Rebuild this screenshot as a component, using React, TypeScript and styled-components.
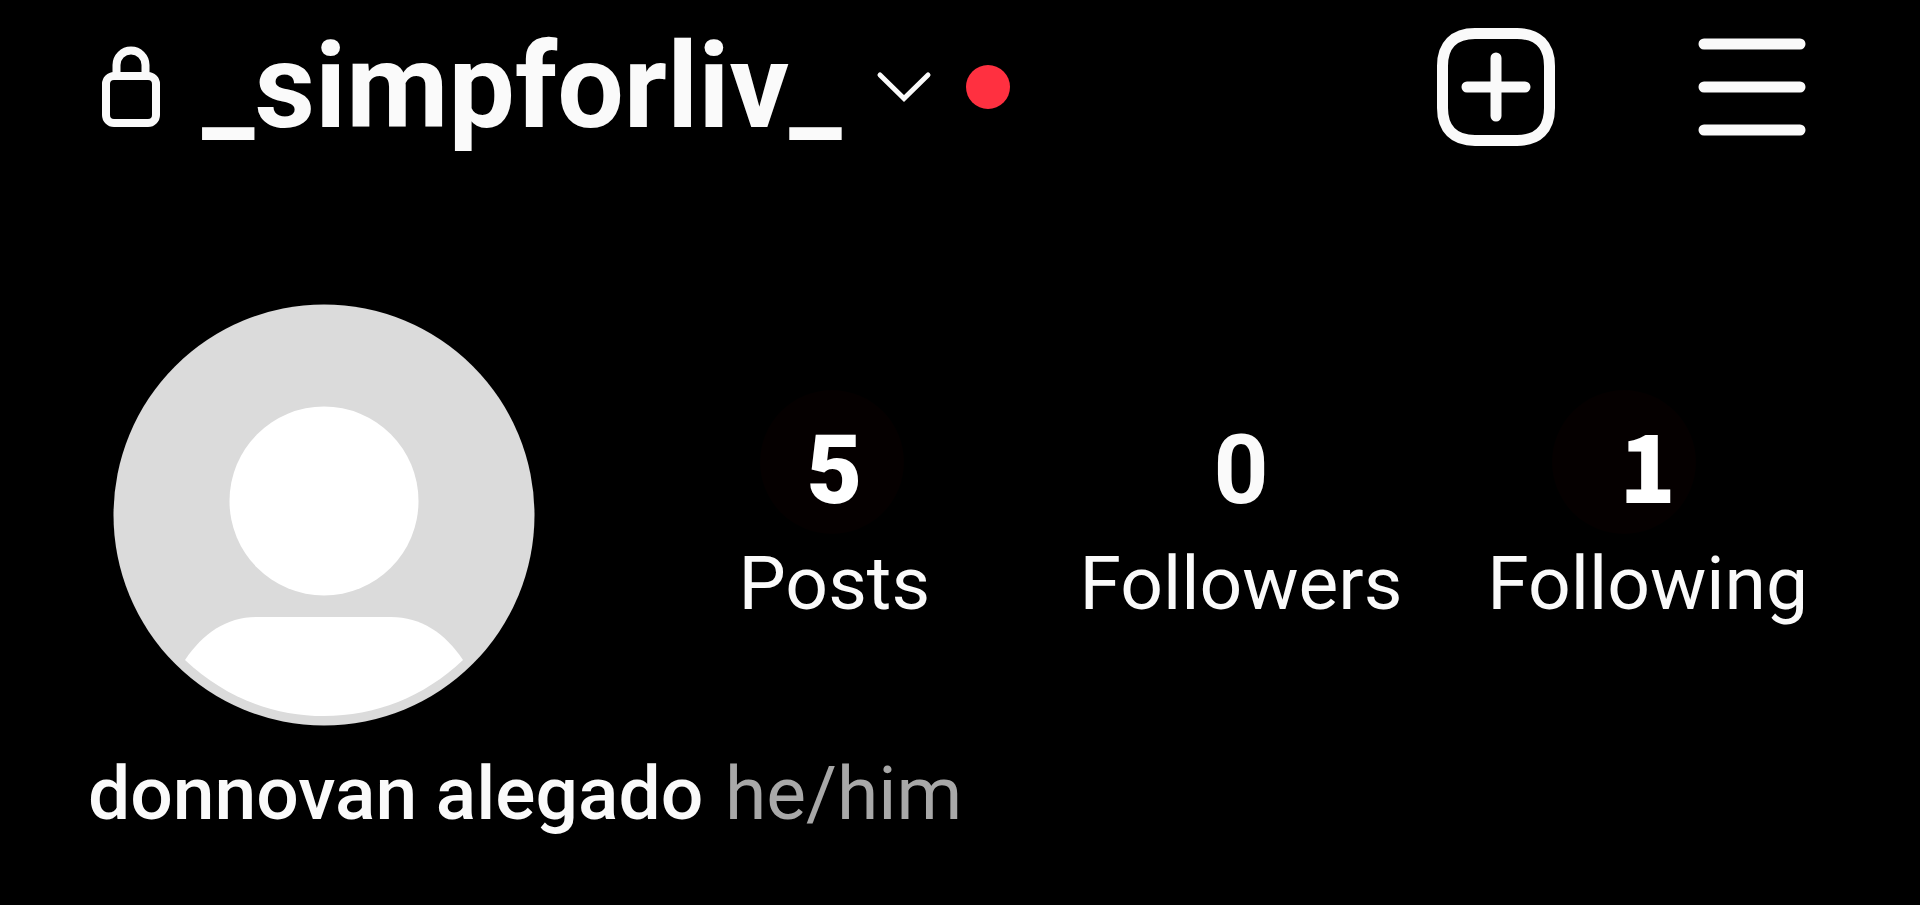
import React from "react";
import styled, { createGlobalStyle } from "styled-components";

const GlobalStyle = createGlobalStyle`
  * { box-sizing: border-box; }
  body {
    margin: 0;
    background: #000;
    color: #fafafa;
    font-family: Roboto, "Liberation Sans", sans-serif;
  }
`;

const Page = styled.div`
  min-height: 100vh;
  background: #000;
`;

const Header = styled.header`
  display: flex;
  align-items: center;
  justify-content: space-between;
  padding: 28px 114px 0 101px;
`;

const Account = styled.div`
  display: flex;
  align-items: center;
  gap: 41px;
`;

const IconButton = styled.button`
  display: flex;
  align-items: center;
  padding: 0;
  border: 0;
  background: none;
  color: inherit;
  font: inherit;
  cursor: pointer;
`;

const AccountSwitcher = styled(IconButton)`
  gap: 34px;
`;

const Username = styled.span`
  font-size: 118px;
  line-height: 118px;
  font-weight: 700;
`;

const UnreadDot = styled.span`
  width: 44px;
  height: 44px;
  border-radius: 50%;
  background: #ff3040;
`;

const Title = styled.h1`
  margin: 0;
  font-size: 118px;
  line-height: 118px;
`;

const Actions = styled.nav`
  display: flex;
  align-items: center;
  gap: 143px;
`;

const Summary = styled.section`
  display: flex;
  align-items: center;
  gap: 96px;
  margin-top: 158px;
  padding: 0 69px 0 113px;
`;

const Stats = styled.div`
  flex: 1;
  display: grid;
  grid-template-columns: repeat(3, 1fr);
`;

const Stat = styled.a`
  display: flex;
  flex-direction: column;
  align-items: center;
  color: #fafafa;
  text-decoration: none;
`;

const Count = styled.span`
  font-size: 96px;
  line-height: 136px;
  font-weight: 700;
`;

/* A count on a faint round backdrop, which may sit left of the digit. */
const MarkedCount = styled(Count)<{ $shift: number }>`
  position: relative;
  z-index: 0;
  color: #fff;

  &::before {
    content: "";
    position: absolute;
    z-index: -1;
    top: -12px;
    left: calc(50% - 72px - ${(p) => p.$shift}px);
    width: 144px;
    height: 144px;
    border-radius: 50%;
    background: #050000;
  }
`;

const HeavyDigit = styled.span<{ $slab?: boolean }>`
  font-family: ${(p) => (p.$slab ? '"Noto Sans CJK SC", sans-serif' : "inherit")};
  font-size: ${(p) => (p.$slab ? "93px" : "96px")};
  line-height: 93px;
  font-weight: 900;
`;

const StatLabel = styled.span`
  font-size: 75px;
  line-height: 90px;
`;

const Bio = styled.p`
  margin: 23px 0 0;
  padding: 0 88px;
  font-size: 75px;
  line-height: 88px;
`;

const DisplayName = styled.span`
  margin-right: 3px;
  font-weight: 500;
`;

const Pronouns = styled.span`
  color: #a8a8a8;
`;

const LockIcon = () => (
  <svg width="60" height="82" viewBox="0 0 60 82" fill="none" stroke="#fafafa" strokeWidth="8" aria-hidden="true">
    <path d="M15.500 28V19A14.500 14.500 0 0 1 44.500 19V28" />
    <rect x="5" y="30" width="50" height="47" rx="8" />
  </svg>
);

const ChevronIcon = () => (
  <svg width="56" height="32" viewBox="0 0 56 32" fill="none" stroke="#fafafa" strokeWidth="5" strokeLinecap="round" aria-hidden="true">
    <path d="M4 4L28 27.500L52 4" />
  </svg>
);

const CreateIcon = () => (
  <svg width="118" height="118" viewBox="0 0 118 118" fill="none" stroke="#fafafa" strokeWidth="11" strokeLinecap="round" aria-hidden="true">
    <path d="M38 5.500H80C101 5.500 112.500 17 112.500 38V80C112.500 101 101 112.500 80 112.500H38C17 112.500 5.500 101 5.500 80V38C5.500 17 17 5.500 38 5.500Z" />
    <path d="M59 30V88M30 59H88" />
  </svg>
);

const MenuIcon = () => (
  <svg width="108" height="98" viewBox="0 0 108 98" fill="none" stroke="#fafafa" strokeWidth="11" strokeLinecap="round" aria-hidden="true">
    <path d="M6 6H102M6 49H102M6 92H102" />
  </svg>
);

const Avatar = () => (
  <svg width="422" height="422" viewBox="0 0 422 422" role="img" aria-label="Profile photo">
    <circle cx="211" cy="211" r="210.500" fill="#dbdbdb" />
    <circle cx="211" cy="197" r="94.500" fill="#fff" />
    <path d="M72 356C90 329 114 313 144 313H278C308 313 332 329 350 356C311 393 262 412 211 412S111 393 72 356Z" fill="#fff" />
  </svg>
);

export default function App() {
  return (
    <Page>
      <GlobalStyle />
      <Header>
        <Account>
          <LockIcon />
          <Title>
            <AccountSwitcher type="button">
              <Username>_simpforliv_</Username>
              <ChevronIcon />
              <UnreadDot />
            </AccountSwitcher>
          </Title>
        </Account>
        <Actions>
          <IconButton type="button" aria-label="Create">
            <CreateIcon />
          </IconButton>
          <IconButton type="button" aria-label="Menu">
            <MenuIcon />
          </IconButton>
        </Actions>
      </Header>
      <main>
        <Summary>
          <Avatar />
          <Stats>
            <Stat href="#posts">
              <MarkedCount $shift={2}>
                <HeavyDigit>5</HeavyDigit>
              </MarkedCount>
              <StatLabel>Posts</StatLabel>
            </Stat>
            <Stat href="#followers">
              <Count>0</Count>
              <StatLabel>Followers</StatLabel>
            </Stat>
            <Stat href="#following">
              <MarkedCount $shift={24}>
                <HeavyDigit $slab>1</HeavyDigit>
              </MarkedCount>
              <StatLabel>Following</StatLabel>
            </Stat>
          </Stats>
        </Summary>
        <Bio>
          <DisplayName>donnovan alegado</DisplayName> <Pronouns>he/him</Pronouns>
        </Bio>
      </main>
    </Page>
  );
}
